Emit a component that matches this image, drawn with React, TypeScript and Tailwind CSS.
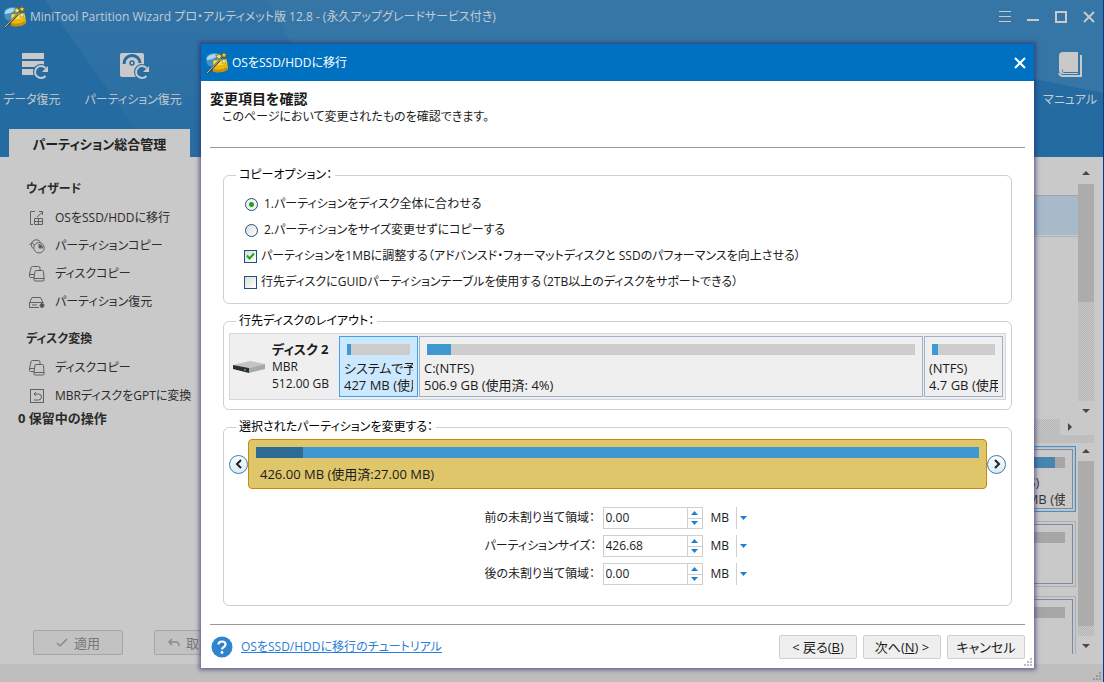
import { useState } from 'react'
import type { ReactNode } from 'react'
import { clsx } from 'clsx'

const dither = 'bg-[repeating-conic-gradient(#b4b4b4_0_25%,#c9c9c9_0_50%)] bg-[length:2px_2px]'

const wizardItems = [
  { label: 'OSをSSD/HDDに移行', icon: 'migrate' },
  { label: 'パーティションコピー', icon: 'pie' },
  { label: 'ディスクコピー', icon: 'copy' },
  { label: 'パーティション復元', icon: 'drive' },
]

const convertItems = [
  { label: 'ディスクコピー', icon: 'copy' },
  { label: 'MBRディスクをGPTに変換', icon: 'convert' },
]

const sizeFields = [
  { id: 'before', label: '前の未割り当て領域：', value: '0.00' },
  { id: 'size', label: 'パーティションサイズ：', value: '426.68' },
  { id: 'after', label: '後の未割り当て領域：', value: '0.00' },
]

function Logo() {
  return (
    <svg viewBox="0 0 22 22" className="h-[22px] w-[22px] shrink-0">
      <path d="M0 7Q0 3 4 2Q8 0 13 2V14Q8 16 3 14Q0 12 0 7Z" fill="#3f93c6" />
      <path d="M1 6Q3 2 9 2Q12 2 12 4Q8 7 2 8Q0 8 1 6Z" fill="#a9d8ee" />
      <path d="M7 9Q7 8 9 8L20 7Q21 7 21 9L22 16Q22 18 19 19Q14 21 9 20Q7 20 7 18Z" fill="#e9b911" />
      <path d="M8 9L20 7.500L21 11Q15 14 8 13Z" fill="#f7dd52" />
      <path d="M8 17Q15 19 21 15Q22 18 19 19Q14 21 9 20Q7 20 7 18Z" fill="#c98d08" />
      <path d="M13 1l1 2.200 2.400.2-1.800 1.600.5 2.400-2.100-1.200-2.100 1.200.5-2.400L9.600 3.400l2.400-.2z" fill="#ffe063" stroke="#6e5a1c" strokeWidth=".6" />
      <path d="M18 0l.8 2 2.200.2-1.700 1.400.5 2.200L18 4.600l-1.800 1.200.5-2.200L15 2.200 17.200 2z" fill="#fbd53f" stroke="#6e5a1c" strokeWidth=".6" />
      <path d="M18 6.500l.8 1.700 1.900.2-1.400 1.300.4 1.900-1.700-1-1.700 1 .4-1.900-1.400-1.300 1.900-.2z" fill="#fff0a0" stroke="#8a6a14" strokeWidth=".5" />
      <path d="M1 21.500L14 8" stroke="#4c4638" strokeWidth="2.200" />
      <path d="M1 21L14 7.500" stroke="#e9e2c8" strokeWidth=".8" />
    </svg>
  )
}

function SideIcon({ name }: { name: string }) {
  return (
    <svg viewBox="0 0 16 16" className="h-4 w-4 shrink-0" fill="none" stroke="#606060" strokeWidth="1">
      {name === 'migrate' && (
        <path d="M6 1.500H1.500v13H4M5.500 8.500h8v6h-8zM9.500 8.500v6M5.500 11.500h8M8 7l5.500-5M10 1.500h3.500V5" />
      )}
      {name === 'pie' && (
        <>
          <path d="M4 10.500A5 5 0 1 1 11.500 4M.5 7L3 4.500 5 7" />
          <circle cx="10" cy="9.800" r="5.200" fill="#c9c9c9" />
          <path d="M10 6.500V10h3.500A3.500 3.500 0 0 0 10 6.500z" fill="#606060" />
        </>
      )}
      {name === 'copy' && (
        <>
          <path d="M5 11.500H1.500q-1 0-1-1V8L2 2Q2.300.5 3.500.5h6Q11 .5 11 2v2M.5 8.500H5" />
          <path d="M7 4.500h6.500q1 0 1 1l.500 6.500v2q0 1-1 1H6q-1 0-1-1V12l1-6.500q0-1 1-1zM5 12.500h10" fill="#c9c9c9" />
        </>
      )}
      {name === 'drive' && (
        <>
          <path d="M.5 8.500L3 3.500h8.500L14 8.500M10 13.500H.5v-5h14M3 11h5" />
          <circle cx="13" cy="11.500" r="2" fill="#505050" />
        </>
      )}
      {name === 'convert' && (
        <>
          <rect x="1.500" y="1.500" width="13" height="13" />
          <path d="M5 12h4.500a2.800 2.800 0 0 0 0-6H5M7 4L5 6l2 2" />
        </>
      )}
    </svg>
  )
}

function ToolButton({ label, children, className }: { label: string; children: ReactNode; className?: string }) {
  return (
    <button className={clsx('flex flex-col items-center gap-2 text-[#c9c9c9]', className)}>
      {children}
      <span className="leading-5 whitespace-nowrap">{label}</span>
    </button>
  )
}

// circular arrow in the lower right corner of the recovery icons
function RestoreMark() {
  return (
    <>
      <circle cx="25" cy="22" r="8" fill="#256ca2" />
      <path d="M29.500 18A6 6 0 1 0 29.500 26" stroke="#c9c9c9" strokeWidth="2" />
      <path d="M32 16v6h-6z" fill="#c9c9c9" />
    </>
  )
}

function Header() {
  return (
    <header className="relative flex h-[157px] shrink-0 flex-col justify-between overflow-hidden bg-[#246ba1]">
      <svg viewBox="0 0 1104 157" preserveAspectRatio="none" className="absolute inset-0 h-full w-full">
        <defs>
          <linearGradient id="beam" x1="0" y1="0" x2="0" y2="1">
            <stop offset="0" stopColor="#3273a6" />
            <stop offset="1" stopColor="#276da2" />
          </linearGradient>
        </defs>
        <path d="M45 0H1104V93L900 51L360 157H155Z" fill="url(#beam)" />
        <path d="M268 0H1104V93L900 51L292 44Z" fill="#3676a7" />
      </svg>
      <div className="relative flex h-[34px] items-center gap-1 pr-2 pl-1">
        <Logo />
        <h1 className="flex-1 text-[#c3cbd2]">
          MiniTool Partition Wizard プロ・アルティメット版 12.8 - (永久アップグレードサービス付き)
        </h1>
        <div className="flex gap-4">
          <button aria-label="メニュー">
            <svg viewBox="0 0 12 12" className="h-3 w-3" stroke="#c9c9c9"><path d="M0 .5h12M0 5.500h12M0 10.500h12" /></svg>
          </button>
          <button aria-label="最小化">
            <svg viewBox="0 0 12 12" className="h-3 w-3"><path d="M0 8h12v2H0z" fill="#c9c9c9" /></svg>
          </button>
          <button aria-label="最大化">
            <svg viewBox="0 0 12 12" className="h-3 w-3" fill="none" stroke="#c9c9c9" strokeWidth="2"><path d="M1 1h10v10H1z" /></svg>
          </button>
          <button aria-label="閉じる">
            <svg viewBox="0 0 12 12" className="h-3 w-3" stroke="#c9c9c9" strokeWidth="2"><path d="M1 1l10 10M11 1L1 11" /></svg>
          </button>
        </div>
      </div>
      <div className="relative flex flex-1 items-start pt-4 pl-[3px]">
        <ToolButton label="データ復元">
          <svg viewBox="0 0 32 32" className="h-8 w-8" fill="none">
            <path d="M6 3h22v6H6zM6 11h22v6H6zM6 19h14v6H6z" fill="#c9c9c9" />
            <RestoreMark />
          </svg>
        </ToolButton>
        <ToolButton label="パーティション復元" className="ml-6">
          <svg viewBox="0 0 32 32" className="h-8 w-8" fill="none">
            <path d="M5 3h20q2 0 2 2v22H5q-2 0-2-2V5q0-2 2-2z" fill="#c9c9c9" />
            <path d="M7 14a8 8 0 0 1 16-1" stroke="#256ca2" strokeWidth="3" />
            <circle cx="15" cy="13" r="2" stroke="#256ca2" strokeWidth="1.500" />
            <RestoreMark />
          </svg>
        </ToolButton>
        <ToolButton label="マニュアル" className="mr-[6px] ml-auto">
          <svg viewBox="0 0 32 32" className="h-8 w-8" fill="none">
            <path d="M9 2h15v17H10q-2 0-2 1.500T10 23h14v-1H9V19h15v5H9q-4 0-4-4V6q0-4 4-4z" fill="#c9c9c9" />
            <path d="M27 5v21H9q-3 0-4-3" stroke="#c9c9c9" strokeWidth="2" />
          </svg>
        </ToolButton>
      </div>
      <button className="relative ml-[9px] flex h-7 w-[181px] items-center justify-center bg-[#c9c9c9] pt-[2px] text-[13px] font-bold text-[#222]">
        パーティション総合管理
      </button>
    </header>
  )
}

function SideList({ title, items }: { title: string; items: { label: string; icon: string }[] }) {
  return (
    <section>
      <h2 className="mb-[5px] pl-[26px] leading-5 font-bold">{title}</h2>
      <ul>
        {items.map((item) => (
          <li key={item.label}>
            <button className="flex h-7 items-center gap-[10px] pl-[29px]">
              <SideIcon name={item.icon} />
              {item.label}
            </button>
          </li>
        ))}
      </ul>
    </section>
  )
}

function Sidebar() {
  return (
    <aside className="flex w-[260px] shrink-0 flex-col pt-[22px] text-[#2b2b2b]">
      <div className="flex flex-col gap-[13px]">
        <SideList title="ウィザード" items={wizardItems} />
        <SideList title="ディスク変換" items={convertItems} />
      </div>
      <p className="pl-[18px] text-[13px] leading-4 font-bold">0 保留中の操作</p>
      <div className="mt-auto mb-[9px] flex gap-[31px] pl-[33px] text-[13px] text-[#777]">
        <button className="flex h-[25px] w-[90px] items-center justify-center gap-[6px] rounded-xs border border-[#a6a6a6] bg-[#c2c2c2]">
          <svg viewBox="0 0 12 10" className="h-[10px] w-3" fill="none" stroke="#8a8a8a" strokeWidth="1.500"><path d="M1 5l3 3 7-7" /></svg>
          適用
        </button>
        <button className="flex h-[25px] w-[90px] items-center gap-[6px] rounded-xs border border-[#a6a6a6] bg-[#c2c2c2] pl-[13px]">
          <svg viewBox="0 0 12 10" className="h-[10px] w-3 shrink-0" fill="none" stroke="#8a8a8a" strokeWidth="1.500"><path d="M4 1L1 4l3 3M1 4h7q3 0 3 4" /></svg>
          取り消し
        </button>
      </div>
    </aside>
  )
}

function Arrow({ dir }: { dir: 'up' | 'down' | 'right' }) {
  return (
    <svg viewBox="0 0 8 8" className={clsx('h-2 w-2', dir === 'down' && 'rotate-180', dir === 'right' && 'rotate-90')}>
      <path d="M0 6L4 2l4 4z" fill="#484848" />
    </svg>
  )
}

function BackdropCard({ selected, filled }: { selected?: boolean; filled?: boolean }) {
  return (
    <div className={clsx('flex h-[66px] shrink-0 justify-end border p-[2px]', selected ? 'border-[#4a90c8] shadow-[inset_0_0_0_1px_#b4bfc8]' : 'border-[#aaaeb4]')}>
      <div className="w-20 overflow-hidden border border-[#7b8b9e] p-[7px] text-[13px] text-[#333]">
        <div className="flex h-[11px] bg-[#a6a6a6]">{filled && <div className="w-[85%] bg-[#4585ae]" />}</div>
        {filled && (
          <p className="overflow-hidden pt-[6px] leading-[17px] whitespace-nowrap">
            (NTFS)
            <br />
            427 MB (使用
          </p>
        )}
      </div>
    </div>
  )
}

function Backdrop() {
  return (
    <main className="flex min-w-0 flex-1 flex-col pr-[9px]">
      <div className="flex h-[262px] shrink-0">
        <div className="flex-1 pt-[38px]">
          <div className="h-10 border-t border-[#a2a6aa] bg-[#a8b9c9]" />
          <div className="mt-px h-px bg-[#a8b4c4]" />
        </div>
        <div className="flex w-4 flex-col items-center pt-3">
          <Arrow dir="up" />
          <div className="mt-[7px] h-[118px] w-full bg-[#acacac]" />
          <div className={clsx('mb-[6px] w-full flex-1', dither)} />
          <Arrow dir="down" />
          <div className="h-1" />
        </div>
      </div>
      <div className="flex h-4 shrink-0 items-center pr-5">
        <div className={clsx('mr-[6px] h-full flex-1', dither)} />
        <Arrow dir="right" />
      </div>
      <div className="h-2 shrink-0 bg-[#bebebe]" />
      <div className="mb-[10px] flex h-[211px] shrink-0">
        <div className="mr-[2px] flex flex-1 flex-col gap-[9px] overflow-hidden pt-[3px]">
          <BackdropCard selected filled />
          <BackdropCard />
          <BackdropCard />
        </div>
        <div className="flex w-4 flex-col items-center pt-1">
          <Arrow dir="up" />
          <div className="mt-[6px] w-full flex-1 bg-[#acacac]" />
          <div className={clsx('mb-[6px] h-[10px] w-full', dither)} />
          <Arrow dir="down" />
          <div className="h-1" />
        </div>
      </div>
    </main>
  )
}

function Group({ title, className, children }: { title: string; className?: string; children: ReactNode }) {
  return (
    <fieldset className={clsx('min-w-0 rounded-md border border-[#cfcfcf] px-[5px]', className)}>
      <legend className="ml-[7px] px-[3px] leading-4 text-black">{title}</legend>
      {children}
    </fieldset>
  )
}

function RadioRow({ label, checked, onChange }: { label: string; checked: boolean; onChange: () => void }) {
  return (
    <label className="flex h-[26px] items-center gap-[6px]">
      <input
        type="radio"
        name="copy-mode"
        checked={checked}
        onChange={onChange}
        className="h-[13px] w-[13px] appearance-none rounded-full border border-[#1d5281] bg-linear-to-br from-[#dcdcdc] to-white checked:bg-[radial-gradient(circle,#21a121_0_2px,#f2f2ee_3px)]"
      />
      {label}
    </label>
  )
}

function CheckRow({ label, defaultChecked }: { label: string; defaultChecked?: boolean }) {
  return (
    <label className="relative flex h-[26px] items-center gap-1">
      <input
        type="checkbox"
        defaultChecked={defaultChecked}
        className="peer h-[13px] w-[13px] appearance-none border border-[#1d5281] bg-linear-to-br from-[#dcdcd7] to-white"
      />
      <svg viewBox="0 0 13 13" className="invisible absolute left-0 h-[13px] w-[13px] peer-checked:visible" fill="none" stroke="#21a121" strokeWidth="2">
        <path d="M3 5.500l2.500 3L10 3.500" />
      </svg>
      {label}
    </label>
  )
}

function PartitionBox({ name, size, used, selected, className }: { name: string; size: string; used: number; selected?: boolean; className?: string }) {
  return (
    <div className={clsx('overflow-hidden border px-1 pt-[7px] text-[13px]', selected ? 'border-[#3fa0ee] bg-[#cce8ff]' : 'border-[#9fb0c9] bg-[#efefef]', className)}>
      <div className="mx-[3px] mb-[5px] h-[11px] bg-[#cdcdcd]">
        <div className="h-full bg-[#3f98d1]" style={{ width: `${used}%` }} />
      </div>
      <p className="overflow-hidden leading-[17px] whitespace-nowrap">{name}</p>
      <p className="overflow-hidden leading-[17px] whitespace-nowrap">{size}</p>
    </div>
  )
}

function NavButton({ label, path }: { label: string; path: string }) {
  return (
    <button aria-label={label} className="flex h-[19px] w-[19px] shrink-0 items-center justify-center rounded-full border border-[#3f7ba8] bg-linear-to-b from-white to-[#d8ecf8]">
      <svg viewBox="0 0 10 10" className="h-[10px] w-[10px]" fill="none" stroke="#222" strokeWidth="2"><path d={path} /></svg>
    </button>
  )
}

function SizeField({ id, label, value }: { id: string; label: string; value: string }) {
  return (
    <div className="flex h-[22px] items-center">
      <label htmlFor={id} className="w-[118px] whitespace-nowrap">{label}</label>
      <div className="flex h-full w-[100px] border border-[#cfcfcf]">
        <input id={id} type="text" defaultValue={value} className="w-[83px] bg-white px-[2px] outline-none" />
        <div className="flex flex-1 flex-col divide-y divide-[#cfcfcf] border-l border-[#cfcfcf]">
          <button aria-label="増やす" className="flex flex-1 items-center justify-center">
            <svg viewBox="0 0 7 4" className="h-1 w-[7px]"><path d="M0 4L3.500 0L7 4z" fill="#1f7fd0" /></svg>
          </button>
          <button aria-label="減らす" className="flex flex-1 items-center justify-center">
            <svg viewBox="0 0 7 4" className="h-1 w-[7px]"><path d="M0 0L3.500 4L7 0z" fill="#1f7fd0" /></svg>
          </button>
        </div>
      </div>
      <div className="relative h-full">
        <select aria-label={`${label}単位`} defaultValue="MB" className="h-full w-12 appearance-none bg-transparent pl-2 outline-none">
          <option>MB</option>
          <option>GB</option>
        </select>
        <div className="pointer-events-none absolute inset-y-0 right-0 flex w-[15px] items-center justify-center border-l border-[#cfcfcf]">
          <svg viewBox="0 0 7 4" className="h-1 w-[7px]"><path d="M0 0L3.500 4L7 0z" fill="#1f7fd0" /></svg>
        </div>
      </div>
    </div>
  )
}

function FooterButton({ children }: { children: ReactNode }) {
  return <button className="h-6 w-[78px] rounded-xs border border-[#cfcfcf] bg-[#efefef] text-[13px] leading-4">{children}</button>
}

function Grip({ className }: { className?: string }) {
  return (
    <svg viewBox="0 0 8 8" className={clsx('absolute right-[2px] bottom-[2px] h-2 w-2', className)} fill="currentColor">
      <path d="M6 0h2v2H6zM3 3h2v2H3zM6 3h2v2H6zM0 6h2v2H0zM3 6h2v2H3zM6 6h2v2H6z" />
    </svg>
  )
}

function MigrateDialog() {
  const [mode, setMode] = useState(1)

  return (
    <div role="dialog" aria-label="OSをSSD/HDDに移行" className="relative flex-1 bg-white text-[#1a1a1a] shadow-[0_0_4px_2px_rgba(45,42,110,0.6)]">
      <div className="flex h-[37px] items-center gap-1 bg-[#0070c0] pr-2 pl-[5px] text-white">
        <Logo />
        <h2 className="flex-1">OSをSSD/HDDに移行</h2>
        <button aria-label="閉じる">
          <svg viewBox="0 0 12 12" className="h-3 w-3" stroke="#fff" strokeWidth="2"><path d="M1 1l10 10M11 1L1 11" /></svg>
        </button>
      </div>

      <div className="mx-[9px] h-[67px] border-b border-[#999] pt-[9px]">
        <h3 className="text-[14px] leading-[18px] font-bold">変更項目を確認</h3>
        <p className="pl-3 leading-[18px]">このページにおいて変更されたものを確認できます。</p>
      </div>

      <div className="flex flex-col gap-[9px] px-[22px] pt-[19px] pb-[18px]">
        <Group title="コピーオプション：" className="py-2">
          <div className="pl-4">
            <RadioRow label="1.パーティションをディスク全体に合わせる" checked={mode === 1} onChange={() => setMode(1)} />
            <RadioRow label="2.パーティションをサイズ変更せずにコピーする" checked={mode === 2} onChange={() => setMode(2)} />
          </div>
          <div className="pl-[15px]">
            <CheckRow label="パーティションを1MBに調整する（アドバンスド・フォーマットディスクと SSDのパフォーマンスを向上させる）" defaultChecked />
            <CheckRow label="行先ディスクにGUIDパーティションテーブルを使用する（2TB以上のディスクをサポートできる）" />
          </div>
        </Group>

        <Group title="行先ディスクのレイアウト：" className="pt-1 pb-[9px]">
          <div className="flex h-[67px] gap-px border border-[#d3d6dd] bg-[#efefef] p-[2px]">
            <div className="flex w-[106px] shrink-0 items-center gap-[6px]">
              <svg viewBox="0 0 34 16" className="h-4 w-[34px] shrink-0">
                <path d="M1 6L18 2L33 5L17 9Z" fill="#c4c4c4" />
                <path d="M17 9L33 5V10L17 14Z" fill="#a8a8a8" />
                <path d="M1 6L17 9V14L1 10Z" fill="#2d2d2d" />
                <circle cx="13" cy="11" r="1" fill="#35c435" />
              </svg>
              <p className="leading-[17px] whitespace-nowrap">
                <strong className="text-[13px]">ディスク 2</strong>
                <br />
                MBR
                <br />
                512.00 GB
              </p>
            </div>
            <PartitionBox name="システムで予約" size="427 MB (使用" used={6} selected className="w-[79px] shrink-0" />
            <PartitionBox name="C:(NTFS)" size="506.9 GB (使用済: 4%)" used={5} className="flex-1" />
            <PartitionBox name="(NTFS)" size="4.7 GB (使用" used={10} className="w-[79px] shrink-0" />
          </div>
        </Group>

        <Group title="選択されたパーティションを変更する：" className="pt-1 pb-5">
          <div className="flex items-center">
            <NavButton label="前へ" path="M7 1L3 5l4 4" />
            <div className="h-[50px] flex-1 rounded-sm border border-[#c88a0a] bg-[#dfc66b] px-[7px] pt-[7px]">
              <div className="h-[11px] bg-[#3f98d1]">
                <div className="h-full w-[47px] bg-[#2d6b95]" />
              </div>
              <p className="pt-[7px] pl-1 text-[13px] leading-[18px]">426.00 MB (使用済:27.00 MB)</p>
            </div>
            <NavButton label="次へ" path="M3 1l4 4-4 4" />
          </div>
          <div className="flex flex-col items-center gap-[6px] pt-[18px]">
            {sizeFields.map((field) => (
              <SizeField key={field.id} {...field} />
            ))}
          </div>
        </Group>
      </div>

      <div className="mx-[9px] flex items-center border-t border-[#999] pt-[10px] pb-[9px]">
        <a href="#tutorial" className="flex items-center gap-2 pl-px text-[#2a80d8]">
          <svg viewBox="0 0 22 22" className="h-[22px] w-[22px]">
            <circle cx="11" cy="11" r="10.500" fill="#2f84cd" />
            <path d="M7.500 8.500Q7.500 5.500 11 5.500T14.500 8.500Q14.500 10 12.500 11.200Q11 12 11 13.500" fill="none" stroke="#fff" strokeWidth="2.200" />
            <circle cx="11" cy="16.500" r="1.400" fill="#fff" />
          </svg>
          <span className="underline">OSをSSD/HDDに移行のチュートリアル</span>
        </a>
        <div className="ml-auto flex gap-[6px]">
          <FooterButton>&lt; 戻る(<u>B</u>)</FooterButton>
          <FooterButton>次へ(<u>N</u>) &gt;</FooterButton>
          <FooterButton>キャンセル</FooterButton>
        </div>
      </div>
      <Grip className="text-[#bdbdbd]" />
    </div>
  )
}

export default function App() {
  return (
    <div className="relative flex min-h-screen flex-col overflow-hidden border-r border-[#0c3a8a] bg-[#c9c9c9] font-['Open_Sans','Noto_Sans_CJK_JP',sans-serif] text-[12px] leading-5 [font-feature-settings:'palt']">
      <Header />
      <div className="flex flex-1">
        <Sidebar />
        <Backdrop />
      </div>
      <footer className="relative h-[18px] shrink-0 bg-[#bebebe]">
        <Grip className="text-[#989898]" />
      </footer>
      <div className="absolute inset-0 flex items-start pt-11 pr-[69px] pl-[201px]">
        <MigrateDialog />
      </div>
    </div>
  )
}
